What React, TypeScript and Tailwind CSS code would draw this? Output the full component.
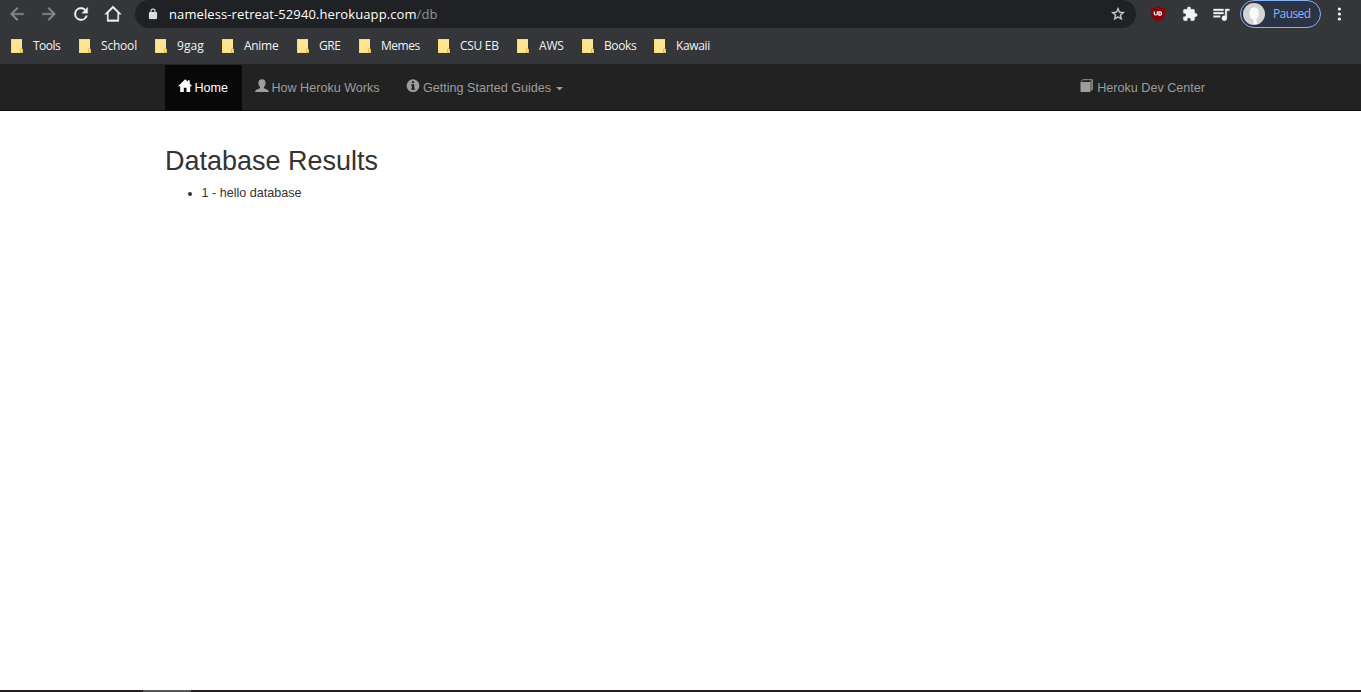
import type { ReactNode } from "react";

const bookmarks = [
  { label: "Tools", box: "w-[68px]", track: "tracking-[-0.5px]" },
  { label: "School", box: "w-[76px]", track: "tracking-[-0.2px]" },
  { label: "9gag", box: "w-[67px]", track: "tracking-[0.1px]" },
  { label: "Anime", box: "w-[75px]", track: "tracking-[-0.3px]" },
  { label: "GRE", box: "w-[62px]", track: "tracking-[-0.4px]" },
  { label: "Memes", box: "w-[79px]", track: "tracking-[-0.5px]" },
  { label: "CSU EB", box: "w-[79px]", track: "tracking-[-0.3px]" },
  { label: "AWS", box: "w-[65px]", track: "tracking-[-0.2px]" },
  { label: "Books", box: "w-[72px]", track: "tracking-[-0.4px]" },
  { label: "Kawaii", box: "w-[76px]", track: "tracking-[-0.35px]" },
];

function Folder() {
  return (
    <svg width="13" height="14" viewBox="0 0 13 14" className="shrink-0">
      <path d="M0 0h11v10h1v4H0z" fill="#ffe590" />
      <path d="M0 0h11v1H1v12h9v1H0z" fill="#f8d978" />
      <path d="M9.500 13.500V10h2v3.500z" fill="#ffe493" stroke="#d9b13f" strokeWidth=".8" />
    </svg>
  );
}

function Material({ d, size, className }: { d: string; size: number; className?: string }) {
  return (
    <svg width={size} height={size} viewBox="0 0 24 24" className={`shrink-0 ${className ?? ""}`}>
      <path d={d} fill="currentColor" stroke="currentColor" strokeWidth=".4" />
    </svg>
  );
}

const paths = {
  back: "M20 11H7.830l5.590-5.590L12 4l-8 8 8 8 1.410-1.410L7.830 13H20v-2z",
  forward: "M12 4l-1.410 1.410L16.170 11H4v2h12.170l-5.580 5.590L12 20l8-8z",
  reload:
    "M17.650 6.350A7.960 7.960 0 0 0 12 4a8 8 0 1 0 7.730 10h-2.080A6 6 0 1 1 12 6c1.660 0 3.140.690 4.220 1.780L13 11h7V4l-2.350 2.350z",
  home: "M12 5.200l5.500 5.200V19h-11v-8.600zM12 2.200L2 12.200h3V21h14v-8.800h3z",
  lock: "M18 8h-1V6A5 5 0 0 0 7 6v2H6a2 2 0 0 0-2 2v10c0 1.100.9 2 2 2h12a2 2 0 0 0 2-2V10a2 2 0 0 0-2-2zM8.900 8V6a3.100 3.100 0 0 1 6.200 0v2z",
  star: "M22 9.240l-7.190-.620L12 2 9.190 8.630 2 9.240l5.460 4.730L5.820 21 12 17.270 18.180 21l-1.630-7.030L22 9.240zM12 15.400l-3.760 2.270 1-4.280-3.320-2.880 4.380-.380L12 6.100l1.710 4.040 4.380.380-3.320 2.880 1 4.280L12 15.400z",
  puzzle:
    "M20.500 11H19V7a2 2 0 0 0-2-2h-4V3.500a2.500 2.500 0 0 0-5 0V5H4a2 2 0 0 0-2 2v3.800h1.500a2.700 2.700 0 0 1 0 5.400H2V20a2 2 0 0 0 2 2h3.800v-1.500a2.700 2.700 0 0 1 5.400 0V22H17a2 2 0 0 0 2-2v-4h1.500a2.500 2.500 0 0 0 0-5z",
  queue:
    "M15 6H3v2h12V6zm0 4H3v2h12v-2zM3 16h8v-2H3v2zM17 6v8.180c-.310-.110-.650-.180-1-.180a3 3 0 1 0 3 3V8h3V6h-5z",
};

function BrowserChrome() {
  return (
    <div className="h-16 bg-[#35363a] font-['Open_Sans','Noto_Sans',sans-serif] text-[#f1f3f4]">
      <div className="flex h-7 items-center">
        <div className="flex w-[135px] shrink-0 items-center gap-3 pl-[7px]">
          <Material d={paths.back} size={20} className="text-[#87888b]" />
          <Material d={paths.forward} size={20} className="text-[#87888b]" />
          <Material d={paths.reload} size={20} />
          <Material d={paths.home} size={20} />
        </div>
        <div className="flex h-7 w-[1001px] shrink-0 items-center rounded-[14px] bg-[#202124] pr-[10px] pl-3">
          <Material d={paths.lock} size={12} className="text-[#dcdde0]" />
          <span className="ml-[10px] text-[13px] leading-7 tracking-[0.1px] whitespace-nowrap text-white">
            nameless-retreat-52940.herokuapp.com<span className="text-[#8f9296]">/db</span>
          </span>
          <Material d={paths.star} size={16} className="ml-auto text-[#d5d7da]" />
        </div>
        <svg width="16" height="16" viewBox="0 0 16 16" className="ml-[14px] shrink-0">
          <path d="M8 .3C6 1.700 3.500 2 .8 2v5.500c0 4 3.400 6.700 7.200 8.300 3.800-1.600 7.200-4.300 7.200-8.300V2C12.500 2 10 1.700 8 .3z" fill="#800610" />
          <path d="M4.300 5.500v2a1.500 1.500 0 0 0 3 0v-2" fill="none" stroke="#fff" strokeWidth="1.200" />
          <path d="M8.900 5.900h1a1.600 1.600 0 0 1 0 3.200h-1z" fill="none" stroke="#fff" strokeWidth="1.200" />
        </svg>
        <Material d={paths.puzzle} size={16} className="ml-4" />
        <Material d={paths.queue} size={20} className="ml-[13px]" />
        <div className="ml-[9px] flex h-7 w-[81px] shrink-0 items-center rounded-[14px] border border-[#8ab4f8] bg-[#2b3345] pl-[2px]">
          <svg width="22" height="22" viewBox="0 0 22 22" className="shrink-0">
            <circle cx="11" cy="11" r="11" fill="#d4d4d4" />
            <path d="M6.500 11c0-4 1-6.500 4.500-6.500s5 2.500 4.800 6.500c-.1 3-1 4.500-2.300 5.500l.5 4.500h-3.500l-.3-4.500C8 15.500 6.500 14 6.500 11z" fill="#fafafa" />
          </svg>
          <span className="ml-[8px] text-[12px] leading-6 tracking-[-0.6px] text-[#8ab4f8]">Paused</span>
        </div>
        <svg width="4" height="14" viewBox="0 0 4 14" className="ml-4 shrink-0" fill="#f1f3f4">
          <circle cx="2.400" cy="2" r="1.600" />
          <circle cx="2.400" cy="7" r="1.600" />
          <circle cx="2.400" cy="12" r="1.600" />
        </svg>
      </div>
      <div className="flex h-9 items-center pl-[11px]">
        {bookmarks.map((b) => (
          <div key={b.label} className={`flex shrink-0 items-center ${b.box}`}>
            <Folder />
            <span className={`ml-[9px] text-[12px] leading-4 whitespace-nowrap ${b.track}`}>{b.label}</span>
          </div>
        ))}
      </div>
    </div>
  );
}

function Glyph({ children }: { children: ReactNode }) {
  return (
    <svg width="14" height="14" viewBox="0 0 14 14" className="mr-[2px] mb-[5px] -ml-px shrink-0" fill="currentColor">
      {children}
    </svg>
  );
}

function SiteNav() {
  return (
    <nav className="h-[47px] border-t border-b border-t-[#222222] border-b-[#080808] bg-[#222222] text-[12.6px] text-[#9d9d9d]">
      <div className="flex h-[45px] pr-[143px] pl-[165px]">
        <a className="flex w-[77px] items-center bg-[#080808] pt-[2px] pl-[14px] text-white">
          <Glyph>
            <path d="M7.200.2 0 7.300h2.200V13H5.800V8.800h2.700V13h3.700V7.300h2L11.700 4.600V1.200h-1.900v1.600z" />
          </Glyph>
          <span className="pl-[0.5px]">Home</span>
        </a>
        <a className="flex w-[151px] items-center pt-[2px] pl-[14px]">
          <Glyph>
            <path d="M7 .3c2.400 0 3.600 1.400 3.600 3.700 0 1.800-.7 3.200-1.600 4v1.200c1.500.8 4.900 1.500 4.900 3.800H.1c0-2.300 3.400-3 4.900-3.800V8c-.9-.8-1.600-2.200-1.600-4C3.400 1.700 4.600.3 7 .3z" />
          </Glyph>
          <span className="pl-[0.4px]">How Heroku Works</span>
        </a>
        <a className="flex items-center pt-[2px] pl-[14px]">
          <Glyph>
            <path
              fillRule="evenodd"
              d="M7 .3a6.400 6.400 0 1 0 0 12.800A6.400 6.400 0 0 0 7 .3zM5.900 2.200h2.200v1.900H5.900zM5 5.200h3.200v4.200H9v1.400H5V9.400h.9V6.600H5z"
            />
          </Glyph>
          <span className="pl-px">Getting Started Guides</span>
          <svg width="7" height="4" viewBox="0 0 7 4" className="ml-[5px]" fill="currentColor">
            <path d="M0 0h7L3.500 3.600z" />
          </svg>
        </a>
        <a className="ml-auto flex items-center pt-[2px] pr-[13px]">
          <Glyph>
            <path d="M.5 3H10v10H.5z" />
            <path d="M10 2.500 12 .9v10.300l-2 1.500z" fill="#77736b" />
            <path d="M1 2.600 2.700.7h9.700v10.200" fill="none" stroke="currentColor" strokeWidth=".9" />
          </Glyph>
          <span className="pl-px">Heroku Dev Center</span>
        </a>
      </div>
    </nav>
  );
}

export default function App() {
  return (
    <div className="flex h-[692px] w-[1361px] flex-col overflow-hidden bg-white font-['Liberation_Sans',Arial,sans-serif]">
      <BrowserChrome />
      <SiteNav />
      <main className="flex-1 pt-[35px] pl-[165px] text-[#333333]">
        <h2 className="text-[27px] leading-[30px] font-normal">Database Results</h2>
        <ul className="mt-[8px] list-disc pl-[36.5px] text-[12.6px] leading-[18px]">
          <li>1 - hello database</li>
        </ul>
      </main>
      <div className="flex h-[2px] bg-[#231f20] pl-[143px]">
        <div className="w-12 bg-[#555555]" />
      </div>
    </div>
  );
}
